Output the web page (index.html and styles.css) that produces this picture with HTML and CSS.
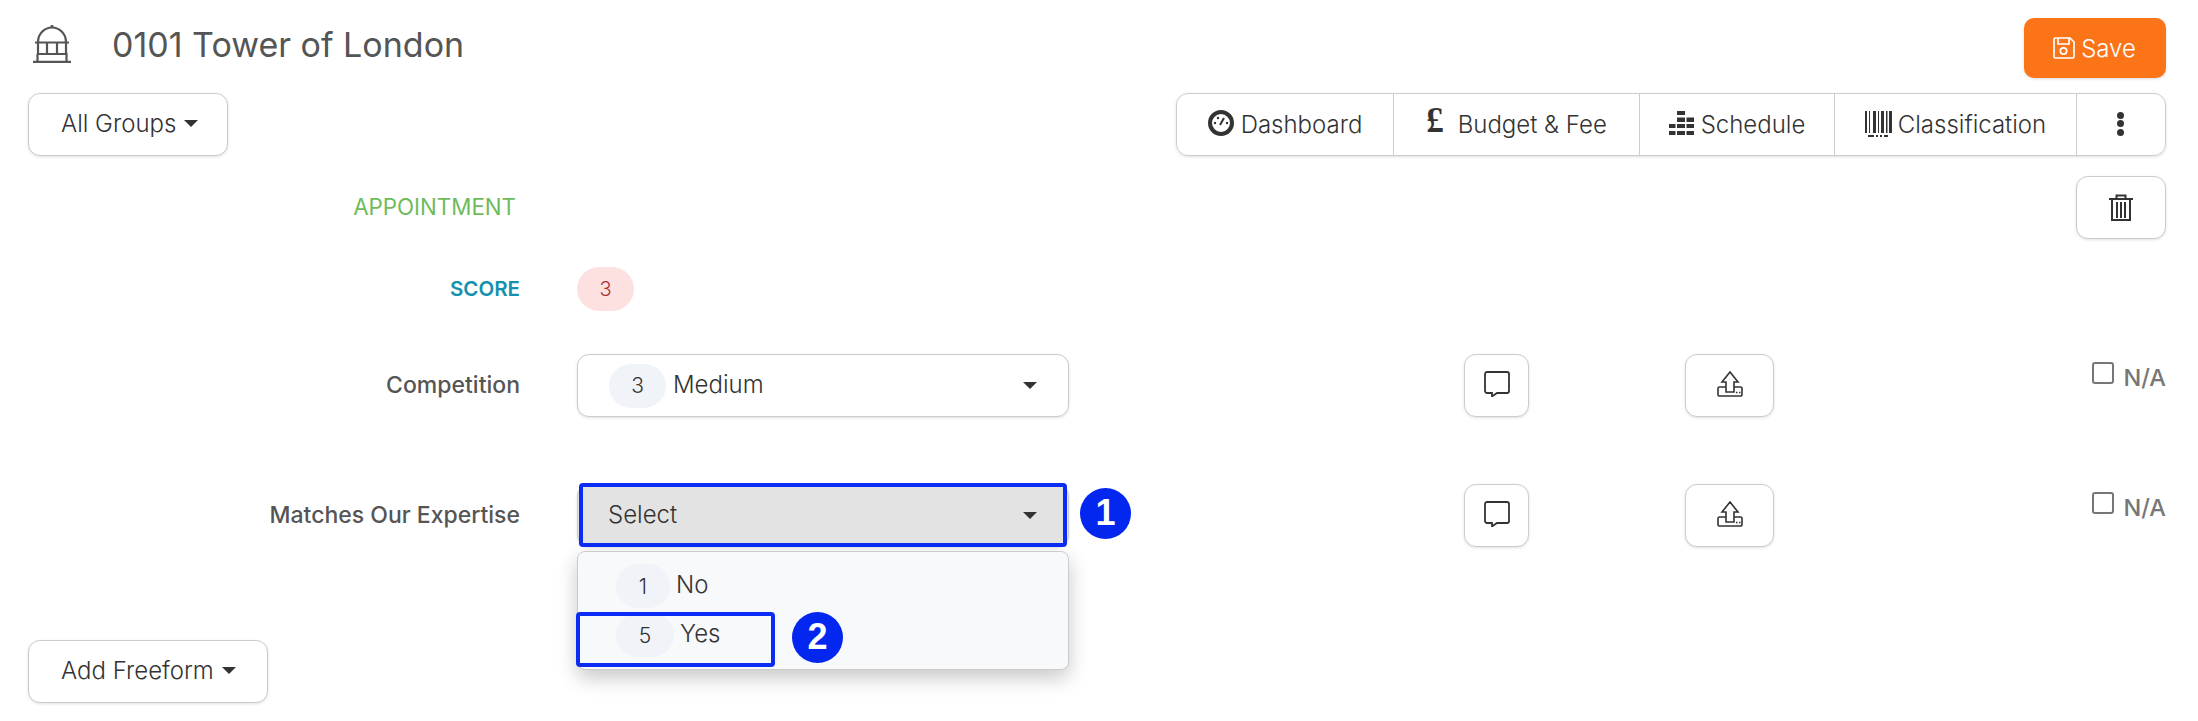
FILE: index.html
```html
<!DOCTYPE html>
<html lang="en">
<head>
<meta charset="utf-8">
<title>0101 Tower of London</title>
<link rel="stylesheet" href="styles.css">
</head>
<body>
<main class="page">
  <header class="head">
    <div class="head-title">
      <svg class="bank" viewBox="0 0 38 38" fill="none" stroke="#555" stroke-width="2.2"><path d="M5 17A14 14.500 0 0 1 33 17"/><path d="M19 0v3" stroke-width="2.600"/><path d="M2 17.500h34"/><path d="M5 18v11M14 18v11M24 18v11M33 18v11"/><path d="M4.500 29h29v7M4.500 29v7"/><path d="M0 36.800h38"/></svg>
      <h1 class="title">0101 Tower of London</h1>
    </div>
    <button class="btn-save"><svg class="save-ico" viewBox="0 0 22 22" fill="none" stroke="#fff" stroke-width="1.700"><path d="M2.500 1H17l4 4v14.500a1.500 1.500 0 0 1-1.500 1.500h-17A1.500 1.500 0 0 1 1 19.500v-17A1.500 1.500 0 0 1 2.500 1z"/><path d="M5 1v6h11V1"/><circle cx="10.500" cy="14" r="3.200"/></svg>Save</button>
  </header>

  <div class="toolbar">
    <button class="btn">All Groups<span class="caret"></span></button>
    <nav class="tabs">
      <a class="tab tab-dash"><svg class="ico" viewBox="0 0 26 26"><circle cx="13" cy="13" r="11" fill="none" stroke="#333" stroke-width="4"/><path d="M12 15l4-7" stroke="#333" stroke-width="2"/><circle cx="7" cy="13" r="1.200" fill="#333"/><circle cx="10" cy="8" r="1.200" fill="#333"/><circle cx="19" cy="13" r="1.200" fill="#333"/></svg>Dashboard</a>
      <a class="tab tab-budget"><span class="pound">£</span>Budget &amp; Fee</a>
      <a class="tab tab-sched"><svg class="ico" viewBox="0 0 25 24" fill="#333"><path d="M8 0h8v4H8zM8 6.500h8V11H8zM17.500 6.500H25V11h-7.500zM0 13h6.500v4H0zM8 13h8v4H8zM17.500 13H25v4h-7.500zM0 20h6.500v4H0zM8 20h8v4H8zM17.500 20H25v4h-7.500z"/></svg>Schedule</a>
      <a class="tab tab-class"><svg class="ico ico-bar" viewBox="0 0 27 26" fill="#333"><path d="M0 0h2v22H0zM4 0h1v22H4zM8 0h3v22H8zM13 0h1v22h-1zM16 0h3v22h-3zM21 0h1.500v22H21zM24 0h3v22h-3zM3 24h6v2H3zM11 24h2v2h-2zM15 24h2v2h-2zM19 24h4v2h-4z"/></svg>Classification</a>
      <a class="tab tab-more"><span class="dots"><i></i><i></i><i></i></span></a>
    </nav>
  </div>

  <section class="row row-appt">
    <div class="label label-appt">APPOINTMENT</div>
    <button class="btn-trash"><svg class="trash" viewBox="0 0 24 27" fill="none" stroke="#333" stroke-width="2"><path d="M0 5h24"/><path d="M7.500 5V1.500h9V5"/><path d="M3 5v21h18V5"/><path d="M8 8v16M12 8v16M16 8v16"/></svg></button>
  </section>

  <section class="row row-score">
    <div class="label label-score">SCORE</div>
    <span class="pill-score">3</span>
  </section>

  <section class="row row-q row-one">
    <div class="label label-q">Competition</div>
    <div class="select"><span class="pill">3</span><span class="sel-text">Medium</span><span class="caret caret-sel"></span></div>
    <button class="btn-ic btn-c"><svg class="comment" viewBox="0 0 26 26" fill="none" stroke="#333" stroke-width="1.800"><path d="M3 1h20a2 2 0 0 1 2 2v17a2 2 0 0 1-2 2H13l-5 3.500V22H3a2 2 0 0 1-2-2V3a2 2 0 0 1 2-2z"/></svg></button>
    <button class="btn-ic btn-u"><svg class="upload" viewBox="0 0 26 26" fill="none" stroke="#333" stroke-width="1.600"><path d="M13 1l8 10h-4v10H9V11H5z"/><path d="M9 16H2.500A1.500 1.500 0 0 0 1 17.500v6A1.500 1.500 0 0 0 2.500 25h21a1.500 1.500 0 0 0 1.500-1.500v-6a1.500 1.500 0 0 0-1.500-1.500H17"/><path d="M19 21.500h1.500M22 21.500h1.500"/></svg></button>
    <label class="na"><span class="cb"></span>N/A</label>
  </section>

  <section class="row row-q row-two">
    <div class="label label-q">Matches Our Expertise</div>
    <div class="select-wrap">
      <div class="select select-open"><span class="sel-text sel-ph">Select</span><span class="caret caret-sel"></span></div>
      <span class="mark mark-select"></span>
      <span class="num num-1">1</span>
      <div class="menu">
        <div class="opt opt-no"><span class="pill pill-no">1</span><span class="opt-text">No</span></div>
        <div class="opt opt-yes"><span class="pill pill-yes">5</span><span class="opt-text">Yes</span></div>
      </div>
      <span class="mark mark-yes"></span>
      <span class="num num-2">2</span>
    </div>
    <button class="btn-ic btn-c"><svg class="comment" viewBox="0 0 26 26" fill="none" stroke="#333" stroke-width="1.800"><path d="M3 1h20a2 2 0 0 1 2 2v17a2 2 0 0 1-2 2H13l-5 3.500V22H3a2 2 0 0 1-2-2V3a2 2 0 0 1 2-2z"/></svg></button>
    <button class="btn-ic btn-u"><svg class="upload" viewBox="0 0 26 26" fill="none" stroke="#333" stroke-width="1.600"><path d="M13 1l8 10h-4v10H9V11H5z"/><path d="M9 16H2.500A1.500 1.500 0 0 0 1 17.500v6A1.500 1.500 0 0 0 2.500 25h21a1.500 1.500 0 0 0 1.500-1.500v-6a1.500 1.500 0 0 0-1.500-1.500H17"/><path d="M19 21.500h1.500M22 21.500h1.500"/></svg></button>
    <label class="na"><span class="cb"></span>N/A</label>
  </section>

  <button class="btn btn-free">Add Freeform<span class="caret"></span></button>
</main>
</body>
</html>
```
FILE: styles.css
```css
* { box-sizing: border-box; }
html, body { margin: 0; background: #fff; }
body { font-family: "Inter", "Liberation Sans", sans-serif; color: #333; overflow: hidden; }
.page { width: 2198px; height: 721px; padding: 18px 32px 0 28px; }
button { font: inherit; color: inherit; background: #fff; cursor: pointer; }

.head { display: flex; justify-content: space-between; height: 60px; }
.head-title { display: flex; align-items: flex-start; padding-top: 7px; padding-left: 5px; }
.bank { width: 38px; height: 38px; }
.title { margin: -1px 0 0 41px; font-size: 34px; line-height: 42px; font-weight: 400; color: #555; }
.btn-save { display: flex; align-items: center; justify-content: center; width: 142px; height: 60px; border: 0; border-radius: 10px; background: #fc7418; color: #fff; font-size: 24px; font-weight: 300; padding: 0 1px 0 0; box-shadow: 0 1px 3px rgba(0,0,0,.15); }
.save-ico { width: 22px; height: 22px; margin-right: 6px; }

.toolbar { display: flex; justify-content: space-between; margin-top: 15px; }
.btn { display: flex; align-items: center; height: 63px; width: 200px; padding: 0 0 2px 32px; border: 1px solid #ccc; border-radius: 12px; font-size: 24px; font-weight: 300; box-shadow: 0 1px 3px rgba(0,0,0,.12); }
.caret { display: inline-block; width: 0; height: 0; border-left: 7px solid transparent; border-right: 7px solid transparent; border-top: 7px solid #333; margin-left: 8px; }
.tabs { display: flex; width: 990px; height: 63px; border: 1px solid #ccc; border-radius: 12px; box-shadow: 0 1px 3px rgba(0,0,0,.12); font-size: 24px; font-weight: 300; }
.tab { display: flex; align-items: center; justify-content: center; border-right: 1px solid #ccc; }
.tab-dash { width: 217px; }
.tab-budget { width: 246px; }
.tab-sched { width: 195px; }
.tab-class { width: 242px; }
.tab-more { flex: 1; border-right: 0; padding-right: 2px; }
.ico { width: 26px; height: 26px; margin-right: 7px; margin-top: -3px; }
.tab-sched .ico { width: 25px; height: 24px; }
.ico-bar { margin-top: -2px; width: 27px; height: 26px; margin-right: 6px; }
.pound { font-family: "Liberation Serif", serif; font-weight: 700; font-size: 35px; line-height: 1; margin-right: 14px; margin-top: -9px; }
.dots { display: flex; flex-direction: column; gap: 1.500px; margin-top: -2px; }
.dots i { display: block; width: 7px; height: 7px; border-radius: 50%; background: #333; }

.row { display: flex; }
.label { width: 492px; text-align: right; flex: none; }
.row-appt { height: 63px; margin-top: 20px; align-items: center; justify-content: space-between; }
.label-appt { width: 488px; font-size: 22.300px; color: #6fbb5a; font-weight: 400; padding-bottom: 2px; }
.btn-trash { width: 90px; height: 63px; display: flex; align-items: center; justify-content: center; padding: 0 0 1px; border: 1px solid #ccc; border-radius: 12px; box-shadow: 0 1px 3px rgba(0,0,0,.12); }
.trash { width: 24px; height: 27px; }
.row-score { height: 44px; margin-top: 28px; align-items: center; }
.label-score { font-size: 20.500px; color: #1491ae; font-weight: 600; padding-bottom: 2px; }
.pill-score { display: flex; align-items: center; justify-content: center; margin-left: 57px; width: 57px; height: 44px; border-radius: 22px; background: #fde1e1; color: #a83232; font-size: 20px; font-weight: 300; }
.row-q { height: 63px; align-items: flex-start; }
.row-one { margin-top: 43px; }
.row-two { margin-top: 67px; }
.label-q { font-size: 23px; font-weight: 500; color: #555; line-height: 62px; }
.select, .select-wrap { width: 492px; height: 63px; margin-left: 57px; flex: none; }
.select { display: flex; align-items: center; padding-left: 31px; border: 1px solid #ccc; border-radius: 12px; background: #fff; position: relative; font-size: 24px; font-weight: 300; box-shadow: 0 1px 3px rgba(0,0,0,.12); }
.select-wrap { position: relative; }
.select-open { margin-left: 0; padding-left: 30px; background: #e3e3e3; }
.pill { display: flex; align-items: center; justify-content: center; width: 57px; height: 44px; border-radius: 22px; background: #f0f4f9; font-size: 21px; font-weight: 300; flex: none; }
.sel-text { margin-left: 7px; padding-bottom: 2px; }
.sel-ph { margin-left: 0; }
.caret-sel { margin-left: auto; margin-right: 31px; }
.btn-ic { display: flex; align-items: center; justify-content: center; padding: 0 0 3px; height: 63px; border: 1px solid #ccc; border-radius: 12px; box-shadow: 0 1px 3px rgba(0,0,0,.12); flex: none; }
.btn-c { width: 65px; margin-left: 395px; }
.btn-u { width: 89px; margin-left: 156px; }
.comment { width: 26px; height: 26px; }
.upload { width: 26px; height: 26px; }
.na { display: flex; align-items: flex-start; margin-left: auto; font-size: 23.500px; font-weight: 500; color: #777; padding-top: 9px; }
.cb { display: block; width: 22px; height: 22px; border: 2px solid #767676; border-radius: 3px; background: #fff; margin-right: 9px; margin-top: -1px; }

.menu { position: absolute; left: 0; top: 67px; width: 492px; height: 119px; padding: 12px 0 0 38px; background: #f8f9fb; border: 1px solid #ccc; border-radius: 8px; box-shadow: 0 8px 20px rgba(0,0,0,.22); font-size: 24px; font-weight: 300; }
.opt { display: flex; align-items: center; height: 44px; }
.opt-yes { margin-top: 5px; }
.pill-no { width: 54px; }
.pill-yes { width: 58px; }
.opt-text { margin-left: 6px; padding-bottom: 3px; }
.mark { position: absolute; border: 4px solid #0a2cf5; border-radius: 4px; pointer-events: none; }
.mark-select { left: 2px; top: -1px; width: 488px; height: 64px; }
.mark-yes { left: -1px; top: 128px; width: 199px; height: 55px; }
.num { position: absolute; display: flex; align-items: center; justify-content: center; width: 51px; height: 51px; border-radius: 50%; background: #0427f0; color: #fff; font-family: "Liberation Sans", sans-serif; font-size: 36px; font-weight: 700; padding-bottom: 2px; }
.num-1 { left: 503px; top: 4px; }
.num-2 { left: 215px; top: 128px; }
.btn-free { width: 240px; margin-top: 93px; }
```
